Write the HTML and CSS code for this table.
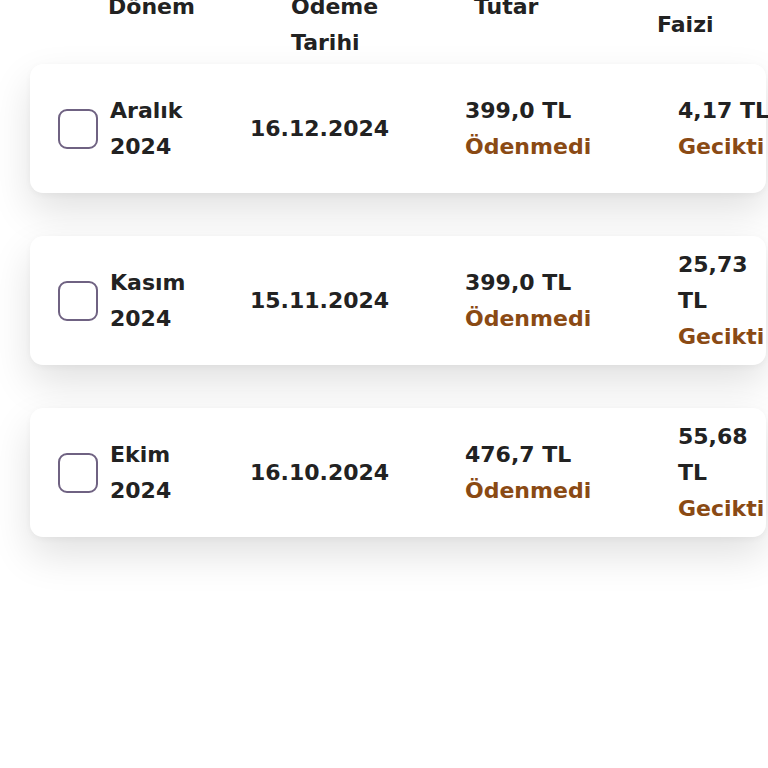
FILE: index.html
```html
<!DOCTYPE html>
<html lang="tr">
<head>
<meta charset="utf-8">
<title>Ödemeler</title>
<link rel="stylesheet" href="styles.css">
</head>
<body>
<div class="page">
  <div class="head">
    <div class="hcol">Dönem</div>
    <div class="hcol">Ödeme Tarihi</div>
    <div class="hcol">Tutar</div>
    <div class="hcol hfee">Gecikme Faizi</div>
  </div>
  <div class="list">
    <div class="card">
      <span class="check"></span>
      <div class="period">Aralık 2024</div>
      <div class="date">16.12.2024</div>
      <div class="amount">399,0 TL<br><span class="status">Ödenmedi</span></div>
      <div class="fee">4,17 TL <span class="status">Gecikti</span></div>
    </div>
    <div class="card">
      <span class="check"></span>
      <div class="period">Kasım 2024</div>
      <div class="date">15.11.2024</div>
      <div class="amount">399,0 TL<br><span class="status">Ödenmedi</span></div>
      <div class="fee">25,73 TL <span class="status">Gecikti</span></div>
    </div>
    <div class="card">
      <span class="check"></span>
      <div class="period">Ekim 2024</div>
      <div class="date">16.10.2024</div>
      <div class="amount">476,7 TL<br><span class="status">Ödenmedi</span></div>
      <div class="fee">55,68 TL <span class="status">Gecikti</span></div>
    </div>
  </div>
</div>
</body>
</html>
```
FILE: styles.css
```css
html, body {
  margin: 0;
  padding: 0;
  background: #ffffff;
}
body {
  font-family: "DejaVu Sans", Inter, sans-serif;
  font-weight: 700;
  font-size: 22px;
  line-height: 36px;
  color: #222222;
}
.page {
  margin-top: -11px;
  padding-bottom: 200px;
}
.head {
  display: grid;
  grid-template-columns: 183px 183px 183px 110px;
  padding-left: 108px;
  height: 75px;
}
.hcol {
  width: 100px;
}
.hfee {
  margin-top: -18px;
}
.list {
  display: flex;
  flex-direction: column;
  gap: 43px;
  margin-left: 30px;
  margin-right: 2px;
}
.card {
  display: grid;
  grid-template-columns: 40px 152px 135px 293px 88px;
  align-items: center;
  min-height: 129px;
  padding-left: 28px;
  background: #ffffff;
  border-radius: 13px;
  box-shadow: 0 18px 40px rgba(0, 0, 0, 0.12), 0 2px 6px rgba(0, 0, 0, 0.04);
  box-sizing: border-box;
}
.check {
  width: 40px;
  height: 40px;
  box-sizing: border-box;
  border: 2px solid #6f6282;
  border-radius: 9px;
}
.period {
  padding-left: 12px;
  width: 90px;
}
.date {
  text-align: right;
  white-space: nowrap;
}
.amount {
  padding-left: 80px;
}
.fee {
  width: 95px;
}
.status {
  color: #8a4a14;
}
```
